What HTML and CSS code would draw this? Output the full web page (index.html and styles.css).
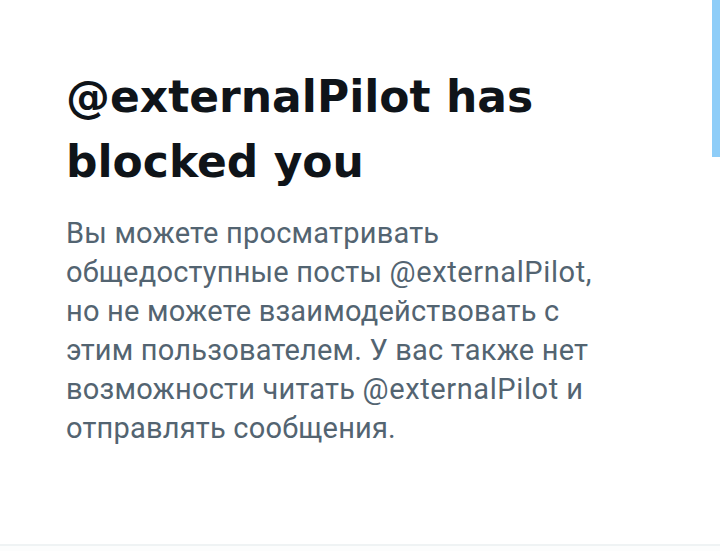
FILE: index.html
```html
<!DOCTYPE html>
<html lang="ru">
	<head>
		<meta charset="UTF-8">
		<meta name="viewport" content="width=device-width, initial-scale=1.0">
		<title>Blocked</title>
		<link rel="stylesheet" href="styles.css">
	</head>
	<body>
		<div class="page">
			<div class="empty-state">
				<h1 class="title">@externalPilot has blocked you</h1>
				<p class="desc">Вы можете просматривать общедоступные посты <span class="handle">@externalPilot</span>, но не можете взаимодействовать с этим пользователем. У вас также нет возможности читать <span class="handle">@externalPilot</span> и отправлять сообщения.</p>
			</div>
			<div class="divider"></div>
		</div>
		<div class="scroll-thumb"></div>
	</body>
</html>
```

FILE: styles.css
```css
body {
	margin: 0;
	background: #fff;
	font-family: Roboto, "Noto Sans", sans-serif;
	overflow: hidden;
}

.page {
	height: 551px;
	display: flex;
	flex-direction: column;
}

.empty-state {
	flex: 1;
	padding: 64px 100px 0 66px;
}

.title {
	margin: 0;
	font-family: "DejaVu Sans", Inter, sans-serif;
	font-weight: 700;
	font-size: 44px;
	line-height: 65px;
	letter-spacing: 0;
	color: #0f1419;
}

.desc {
	margin: 20px 0 0;
	font-size: 29px;
	line-height: 39px;
	letter-spacing: 0.2px;
	color: #536471;
}

.handle {
	letter-spacing: 0.6px;
}

.divider {
	height: 5px;
	border-top: 2px solid #eff3f4;
	background: #fcfdfd;
}

.scroll-thumb {
	position: absolute;
	top: 0;
	right: 0;
	width: 8px;
	height: 157px;
	background: #8ecdf8;
}
```
